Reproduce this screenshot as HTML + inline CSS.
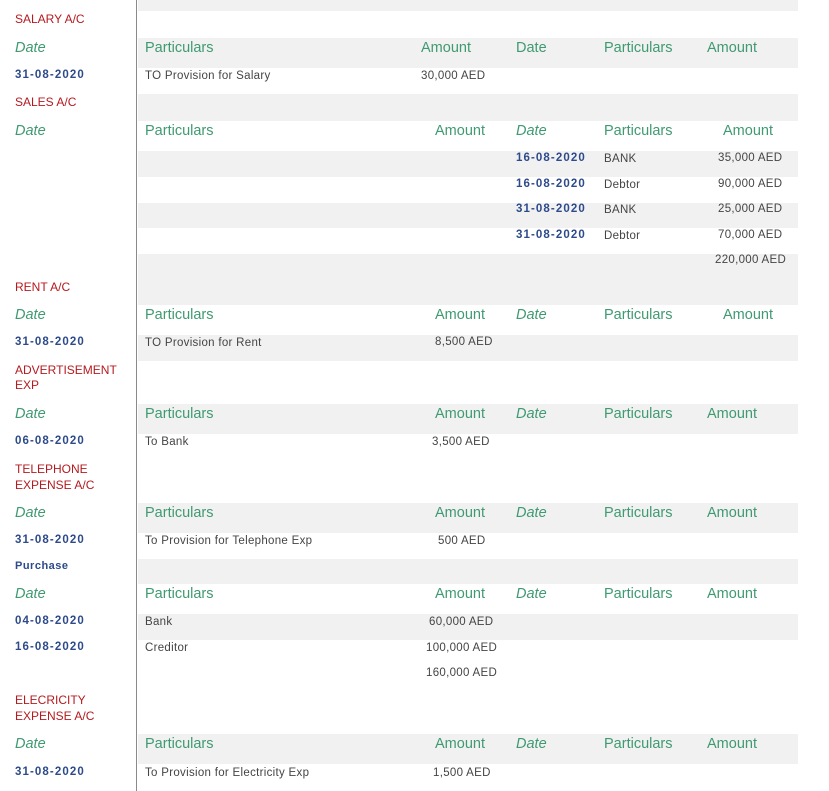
<!DOCTYPE html>
<html><head><meta charset="utf-8"><style>
body{margin:0;width:829px;height:791px;background:#fff;position:relative;overflow:hidden;font-family:"Liberation Sans",sans-serif}
.g{position:absolute;left:138px;width:660px;background:#f1f1f1}
.v{position:absolute;left:136px;top:0;width:1px;height:791px;background:#8a8a8a}
div.t{position:absolute;white-space:nowrap;line-height:16px;margin-top:2px}
.r{color:#b51a1f;font-size:12px}
.h{color:#3f9a72;font-size:14.5px}
.i{font-style:italic}
.d{color:#2d4a8a;font-size:11.5px;font-weight:bold;letter-spacing:1.1px}
.x{color:#444;font-size:11.5px;letter-spacing:.3px}
</style></head><body>
<div class="g" style="top:0;height:11px"></div>
<div class="g" style="top:38px;height:30px"></div>
<div class="g" style="top:94px;height:27px"></div>
<div class="g" style="top:151px;height:26px"></div>
<div class="g" style="top:203px;height:25px"></div>
<div class="g" style="top:254px;height:51px"></div>
<div class="g" style="top:335px;height:26px"></div>
<div class="g" style="top:404px;height:30px"></div>
<div class="g" style="top:503px;height:30px"></div>
<div class="g" style="top:559px;height:25px"></div>
<div class="g" style="top:614px;height:26px"></div>
<div class="g" style="top:734px;height:30px"></div>
<div class="v"></div>

<div class="t r" style="left:15px;top:9px">SALARY A/C</div>
<div class="t h i" style="left:15px;top:38px">Date</div>
<div class="t h" style="left:145px;top:38px">Particulars</div>
<div class="t h" style="left:421px;top:38px">Amount</div>
<div class="t h" style="left:516px;top:38px">Date</div>
<div class="t h" style="left:604px;top:38px">Particulars</div>
<div class="t h" style="left:707px;top:38px">Amount</div>
<div class="t d" style="left:15px;top:65px">31-08-2020</div>
<div class="t x" style="left:145px;top:66px">TO Provision for Salary</div>
<div class="t x" style="left:421px;top:66px">30,000 AED</div>

<div class="t r" style="left:15px;top:92px">SALES A/C</div>
<div class="t h i" style="left:15px;top:121px">Date</div>
<div class="t h" style="left:145px;top:121px">Particulars</div>
<div class="t h" style="left:435px;top:121px">Amount</div>
<div class="t h i" style="left:516px;top:121px">Date</div>
<div class="t h" style="left:604px;top:121px">Particulars</div>
<div class="t h" style="left:723px;top:121px">Amount</div>
<div class="t d" style="left:516px;top:148px">16-08-2020</div><div class="t x" style="left:604px;top:149px">BANK</div><div class="t x" style="left:718px;top:148px">35,000 AED</div>
<div class="t d" style="left:516px;top:174px">16-08-2020</div><div class="t x" style="left:604px;top:175px">Debtor</div><div class="t x" style="left:718px;top:174px">90,000 AED</div>
<div class="t d" style="left:516px;top:199px">31-08-2020</div><div class="t x" style="left:604px;top:200px">BANK</div><div class="t x" style="left:718px;top:199px">25,000 AED</div>
<div class="t d" style="left:516px;top:225px">31-08-2020</div><div class="t x" style="left:604px;top:226px">Debtor</div><div class="t x" style="left:718px;top:225px">70,000 AED</div>
<div class="t x" style="left:715px;top:250px">220,000 AED</div>

<div class="t r" style="left:15px;top:277px">RENT A/C</div>
<div class="t h i" style="left:15px;top:305px">Date</div>
<div class="t h" style="left:145px;top:305px">Particulars</div>
<div class="t h" style="left:435px;top:305px">Amount</div>
<div class="t h i" style="left:516px;top:305px">Date</div>
<div class="t h" style="left:604px;top:305px">Particulars</div>
<div class="t h" style="left:723px;top:305px">Amount</div>
<div class="t d" style="left:15px;top:332px">31-08-2020</div>
<div class="t x" style="left:145px;top:333px">TO Provision for Rent</div>
<div class="t x" style="left:435px;top:332px">8,500 AED</div>

<div class="t r" style="left:15px;top:360px">ADVERTISEMENT</div>
<div class="t r" style="left:15px;top:375px">EXP</div>
<div class="t h i" style="left:15px;top:404px">Date</div>
<div class="t h" style="left:145px;top:404px">Particulars</div>
<div class="t h" style="left:435px;top:404px">Amount</div>
<div class="t h i" style="left:516px;top:404px">Date</div>
<div class="t h" style="left:604px;top:404px">Particulars</div>
<div class="t h" style="left:707px;top:404px">Amount</div>
<div class="t d" style="left:15px;top:431px">06-08-2020</div>
<div class="t x" style="left:145px;top:432px">To Bank</div>
<div class="t x" style="left:432px;top:432px">3,500 AED</div>

<div class="t r" style="left:15px;top:459px">TELEPHONE</div>
<div class="t r" style="left:15px;top:475px">EXPENSE A/C</div>
<div class="t h i" style="left:15px;top:503px">Date</div>
<div class="t h" style="left:145px;top:503px">Particulars</div>
<div class="t h" style="left:435px;top:503px">Amount</div>
<div class="t h i" style="left:516px;top:503px">Date</div>
<div class="t h" style="left:604px;top:503px">Particulars</div>
<div class="t h" style="left:707px;top:503px">Amount</div>
<div class="t d" style="left:15px;top:530px">31-08-2020</div>
<div class="t x" style="left:145px;top:531px">To Provision for Telephone Exp</div>
<div class="t x" style="left:438px;top:531px">500 AED</div>

<div class="t d" style="left:15px;top:556px;font-size:11px;letter-spacing:.5px">Purchase</div>
<div class="t h i" style="left:15px;top:584px">Date</div>
<div class="t h" style="left:145px;top:584px">Particulars</div>
<div class="t h" style="left:435px;top:584px">Amount</div>
<div class="t h i" style="left:516px;top:584px">Date</div>
<div class="t h" style="left:604px;top:584px">Particulars</div>
<div class="t h" style="left:707px;top:584px">Amount</div>
<div class="t d" style="left:15px;top:611px">04-08-2020</div>
<div class="t x" style="left:145px;top:612px">Bank</div>
<div class="t x" style="left:429px;top:612px">60,000 AED</div>
<div class="t d" style="left:15px;top:637px">16-08-2020</div>
<div class="t x" style="left:145px;top:638px">Creditor</div>
<div class="t x" style="left:426px;top:638px">100,000 AED</div>
<div class="t x" style="left:426px;top:663px">160,000 AED</div>

<div class="t r" style="left:15px;top:690px">ELECRICITY</div>
<div class="t r" style="left:15px;top:706px">EXPENSE A/C</div>
<div class="t h i" style="left:15px;top:734px">Date</div>
<div class="t h" style="left:145px;top:734px">Particulars</div>
<div class="t h" style="left:435px;top:734px">Amount</div>
<div class="t h i" style="left:516px;top:734px">Date</div>
<div class="t h" style="left:604px;top:734px">Particulars</div>
<div class="t h" style="left:707px;top:734px">Amount</div>
<div class="t d" style="left:15px;top:762px">31-08-2020</div>
<div class="t x" style="left:145px;top:763px">To Provision for Electricity Exp</div>
<div class="t x" style="left:433px;top:763px">1,500 AED</div>
</body></html>
